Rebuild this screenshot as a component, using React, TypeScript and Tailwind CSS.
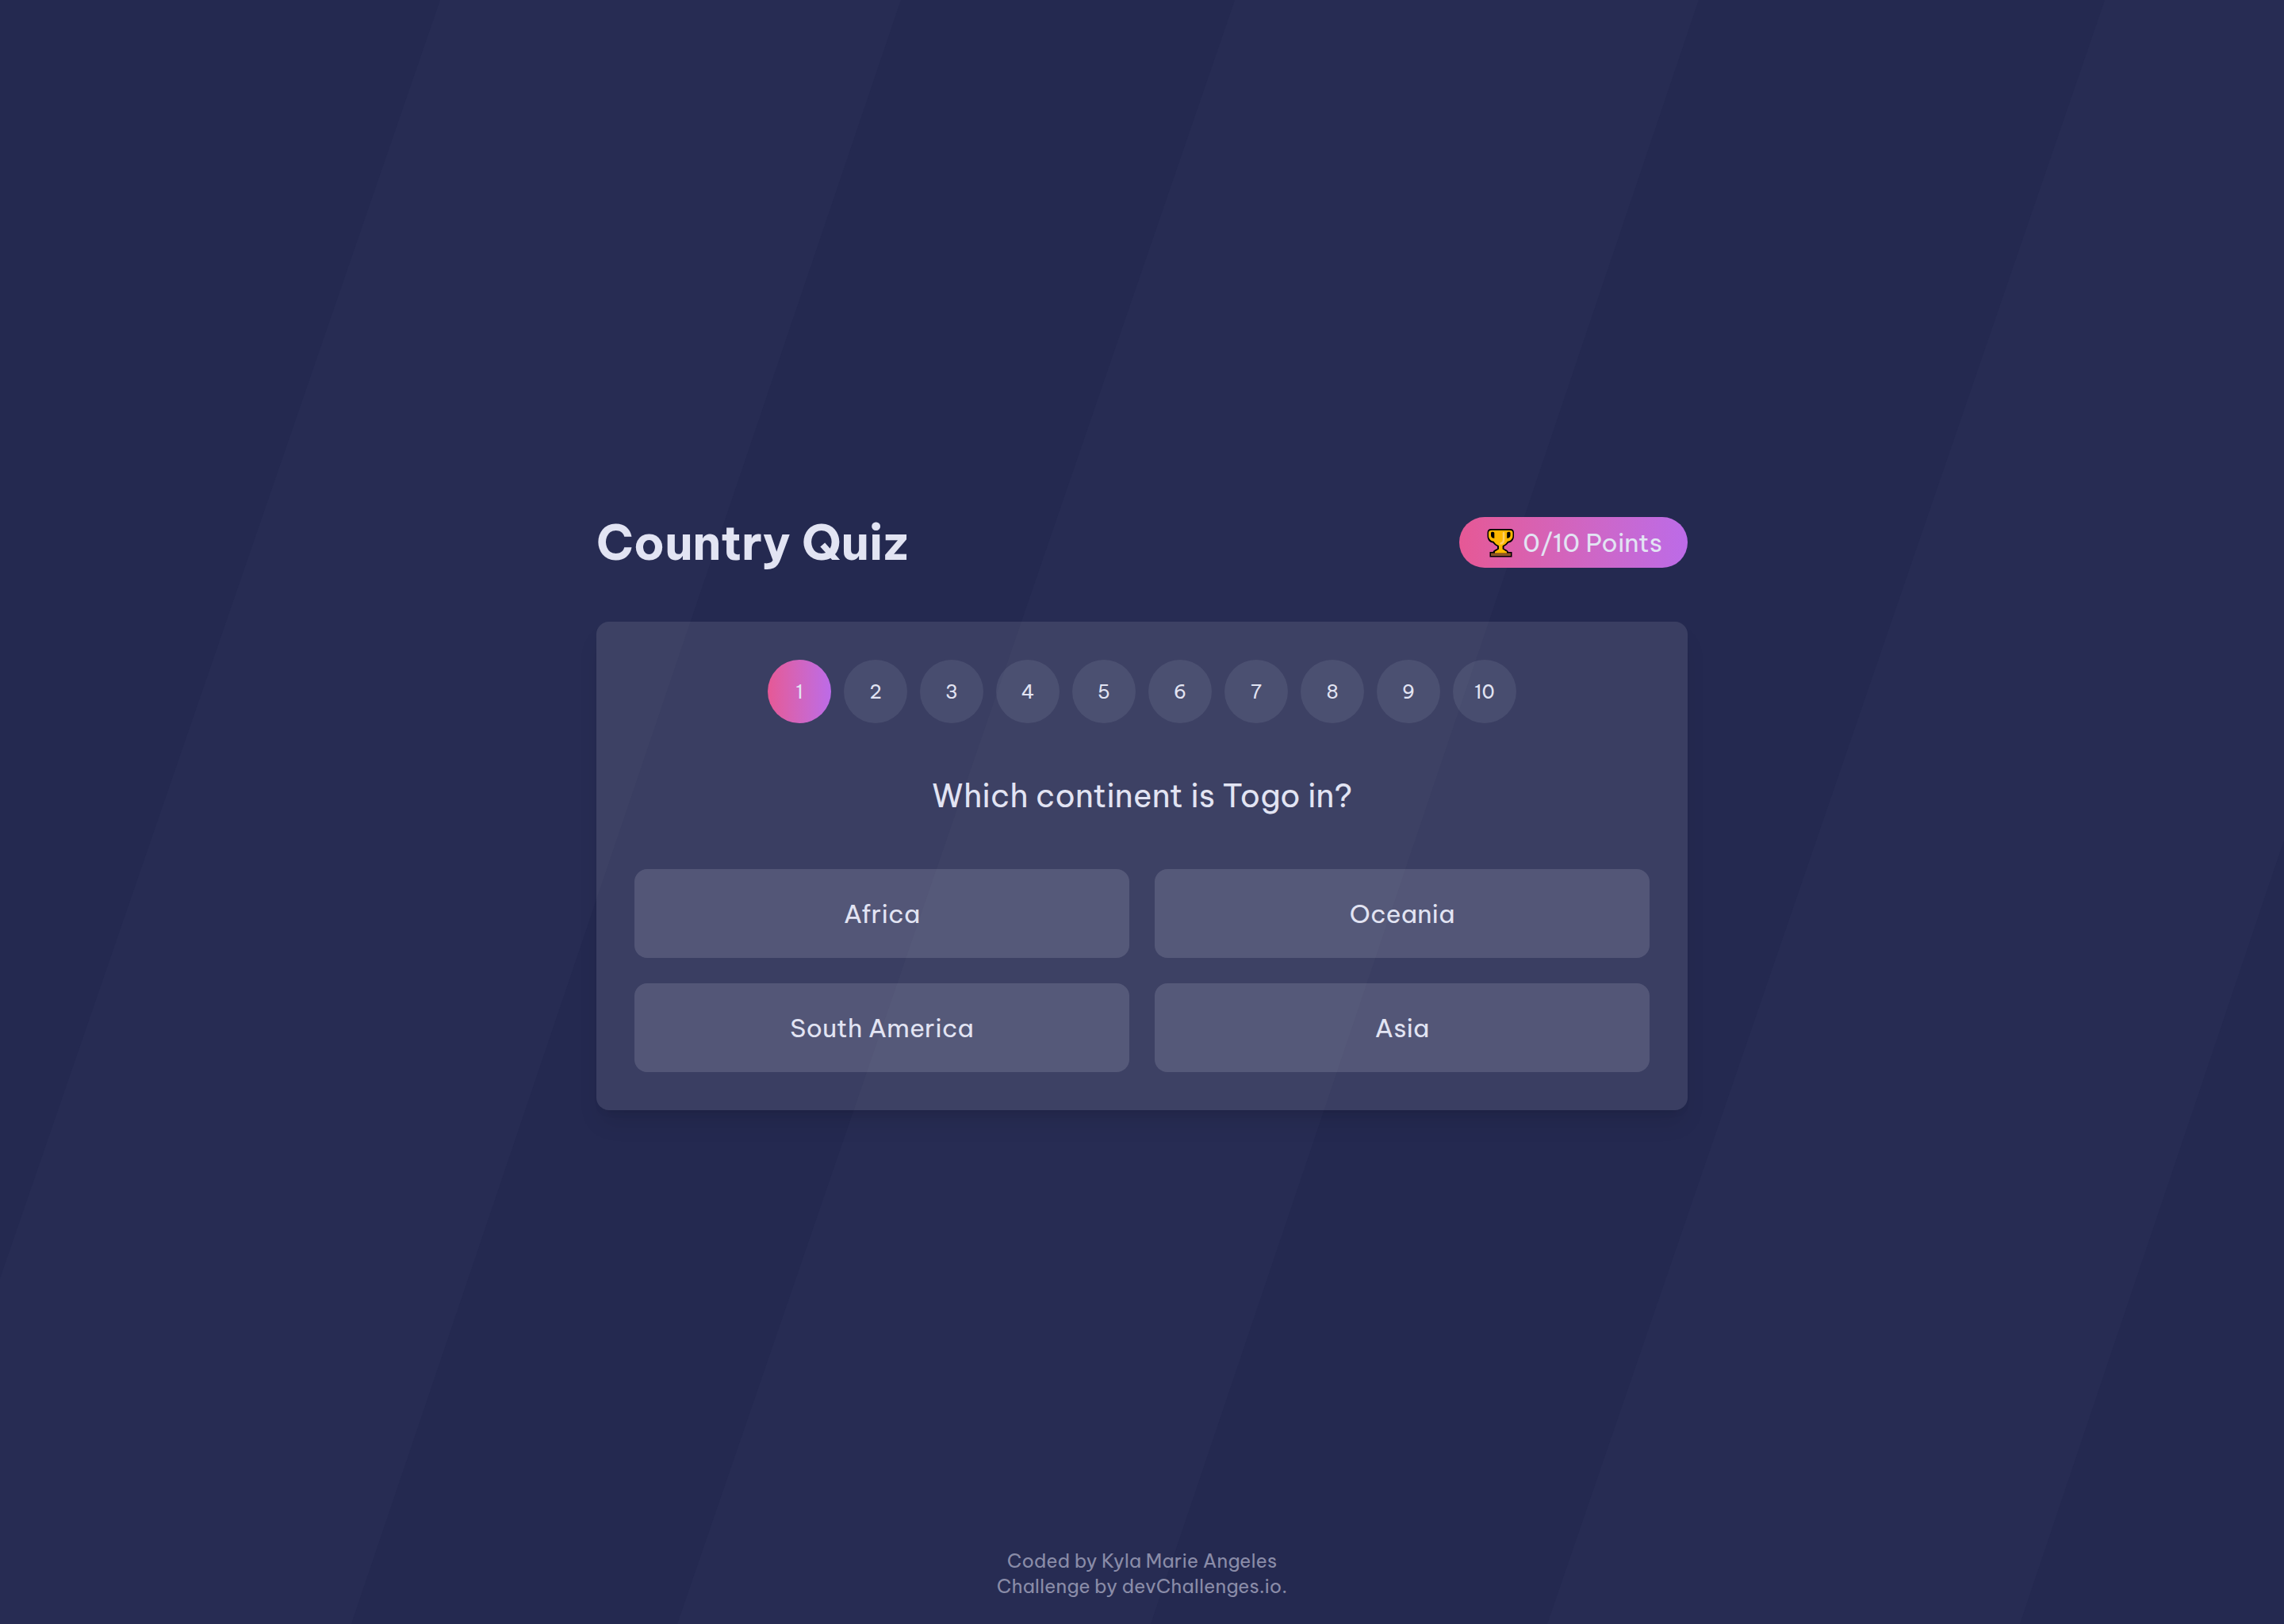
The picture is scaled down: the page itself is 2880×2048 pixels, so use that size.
import { useState } from "react";

const OPTIONS = ["Africa", "Oceania", "South America", "Asia"];
const QUESTIONS = Array.from({ length: 10 }, (_, i) => i + 1);

function Backdrop() {
  return (
    <svg
      className="absolute inset-0 -z-10 h-full w-full"
      viewBox="0 0 2880 2048"
      preserveAspectRatio="xMidYMid slice"
      aria-hidden="true"
    >
      <rect width="2880" height="2048" fill="#242950" />
      <g fill="#272c53">
        <path d="M555 0H1136L443 2048H-150Z" />
        <path d="M1557 0H2142L1451 2048H854Z" />
        <path d="M2654 0H3237L2547 2048H1951Z" />
      </g>
    </svg>
  );
}

function Trophy() {
  return (
    <svg className="size-10" viewBox="0 0 40 40" aria-hidden="true">
      <path
        d="M8 3H32.5C35.5 3 37 5 37 7.5V12C37 17 34 20 30 20.5C28.5 22.5 26.5 24 24.5 25V28C27 29 29.5 30 30 32H34.5V38.5H6.5V32H10.5C11 30 13.5 29 16 28V25C14 24 12 22.5 10.5 20.5C6.5 20 3.5 17 3.5 12V7.5C3.5 5 5 3 8 3Z"
        fill="#000"
      />
      <path
        d="M9 4.8H31.5C34 4.8 35.5 6 35.5 8V11.5C35.5 15.5 33 18 29 18.8C27.5 21.5 25 23.3 22.6 24.2V28.5C25 30 27 30.5 28 33H12.8C13.5 30.5 16 30 18 28.5V24.2C15.5 23.3 13 21.5 11.5 18.8C7.5 18 5 15.5 5 11.5V8C5 6 6.5 4.8 9 4.8Z"
        fill="#ffb800"
      />
      <path
        d="M9.5 6.8C11 6.8 12.3 7 12.3 8.5V14.8C9.5 14.5 8 13.5 8 11V8.5C8 7.3 8.5 6.8 9.5 6.8Z"
        fill="#000"
      />
      <path
        d="M31 6.8C29.5 6.8 28.2 7 28.2 8.5V14.8C31 14.5 32.5 13.5 32.5 11V8.5C32.5 7.3 32 6.8 31 6.8Z"
        fill="#000"
      />
      <path d="M8 33.5H33V37H8Z" fill="#8d5425" />
      <path d="M13 31.5H28V33.5H13Z" fill="#ffb800" />
      <path
        d="M24 8V17C24 19.5 22.5 21 20.5 21.5"
        fill="none"
        stroke="#ffcf62"
        strokeWidth="2.5"
        strokeLinecap="round"
      />
    </svg>
  );
}

export default function App() {
  const [current, setCurrent] = useState(1);
  return (
    <div className="relative isolate flex min-h-screen flex-col overflow-hidden bg-[#242950] font-['Be_Vietnam_Pro','Inter',sans-serif] text-[#e2e4f3]">
      <Backdrop />
      <main className="flex flex-1 flex-col items-center justify-center px-8 pt-24">
        <div className="w-full max-w-[1376px]">
          <header className="mb-16 flex items-center justify-between">
            <h1 className="text-6xl leading-18 font-bold">Country Quiz</h1>
            <div className="flex h-16 items-center gap-2 rounded-full bg-linear-to-r from-[#e65895] to-[#bc6be8] px-8 text-[32px] leading-10">
              <Trophy />
              <span>0/10 Points</span>
            </div>
          </header>
          <section className="rounded-2xl bg-white/10 p-12 shadow-[0_20px_30px_-6px_rgba(0,0,0,0.1),0_8px_12px_-8px_rgba(0,0,0,0.1)]">
            <nav aria-label="Questions" className="flex justify-center gap-4">
              {QUESTIONS.map((n) => (
                <button
                  key={n}
                  type="button"
                  onClick={() => setCurrent(n)}
                  className={
                    n === current
                      ? "size-20 rounded-full bg-linear-to-r from-[#e65895] to-[#bc6be8] text-2xl"
                      : "size-20 rounded-full bg-[#e2e4f3]/9 text-2xl"
                  }
                >
                  {n}
                </button>
              ))}
            </nav>
            <h2 className="my-16 text-center text-[40px] leading-14">Which continent is Togo in?</h2>
            <div className="grid grid-cols-2 gap-8">
              {OPTIONS.map((option) => (
                <button key={option} type="button" className="h-28 rounded-2xl bg-[#e2e4f3]/15 text-[32px]">
                  {option}
                </button>
              ))}
            </div>
          </section>
        </div>
      </main>
      <footer className="pb-8 text-center text-2xl leading-8 text-[#8a8ca8]">
        <p>Coded by Kyla Marie Angeles</p>
        <p>Challenge by devChallenges.io.</p>
      </footer>
    </div>
  );
}
